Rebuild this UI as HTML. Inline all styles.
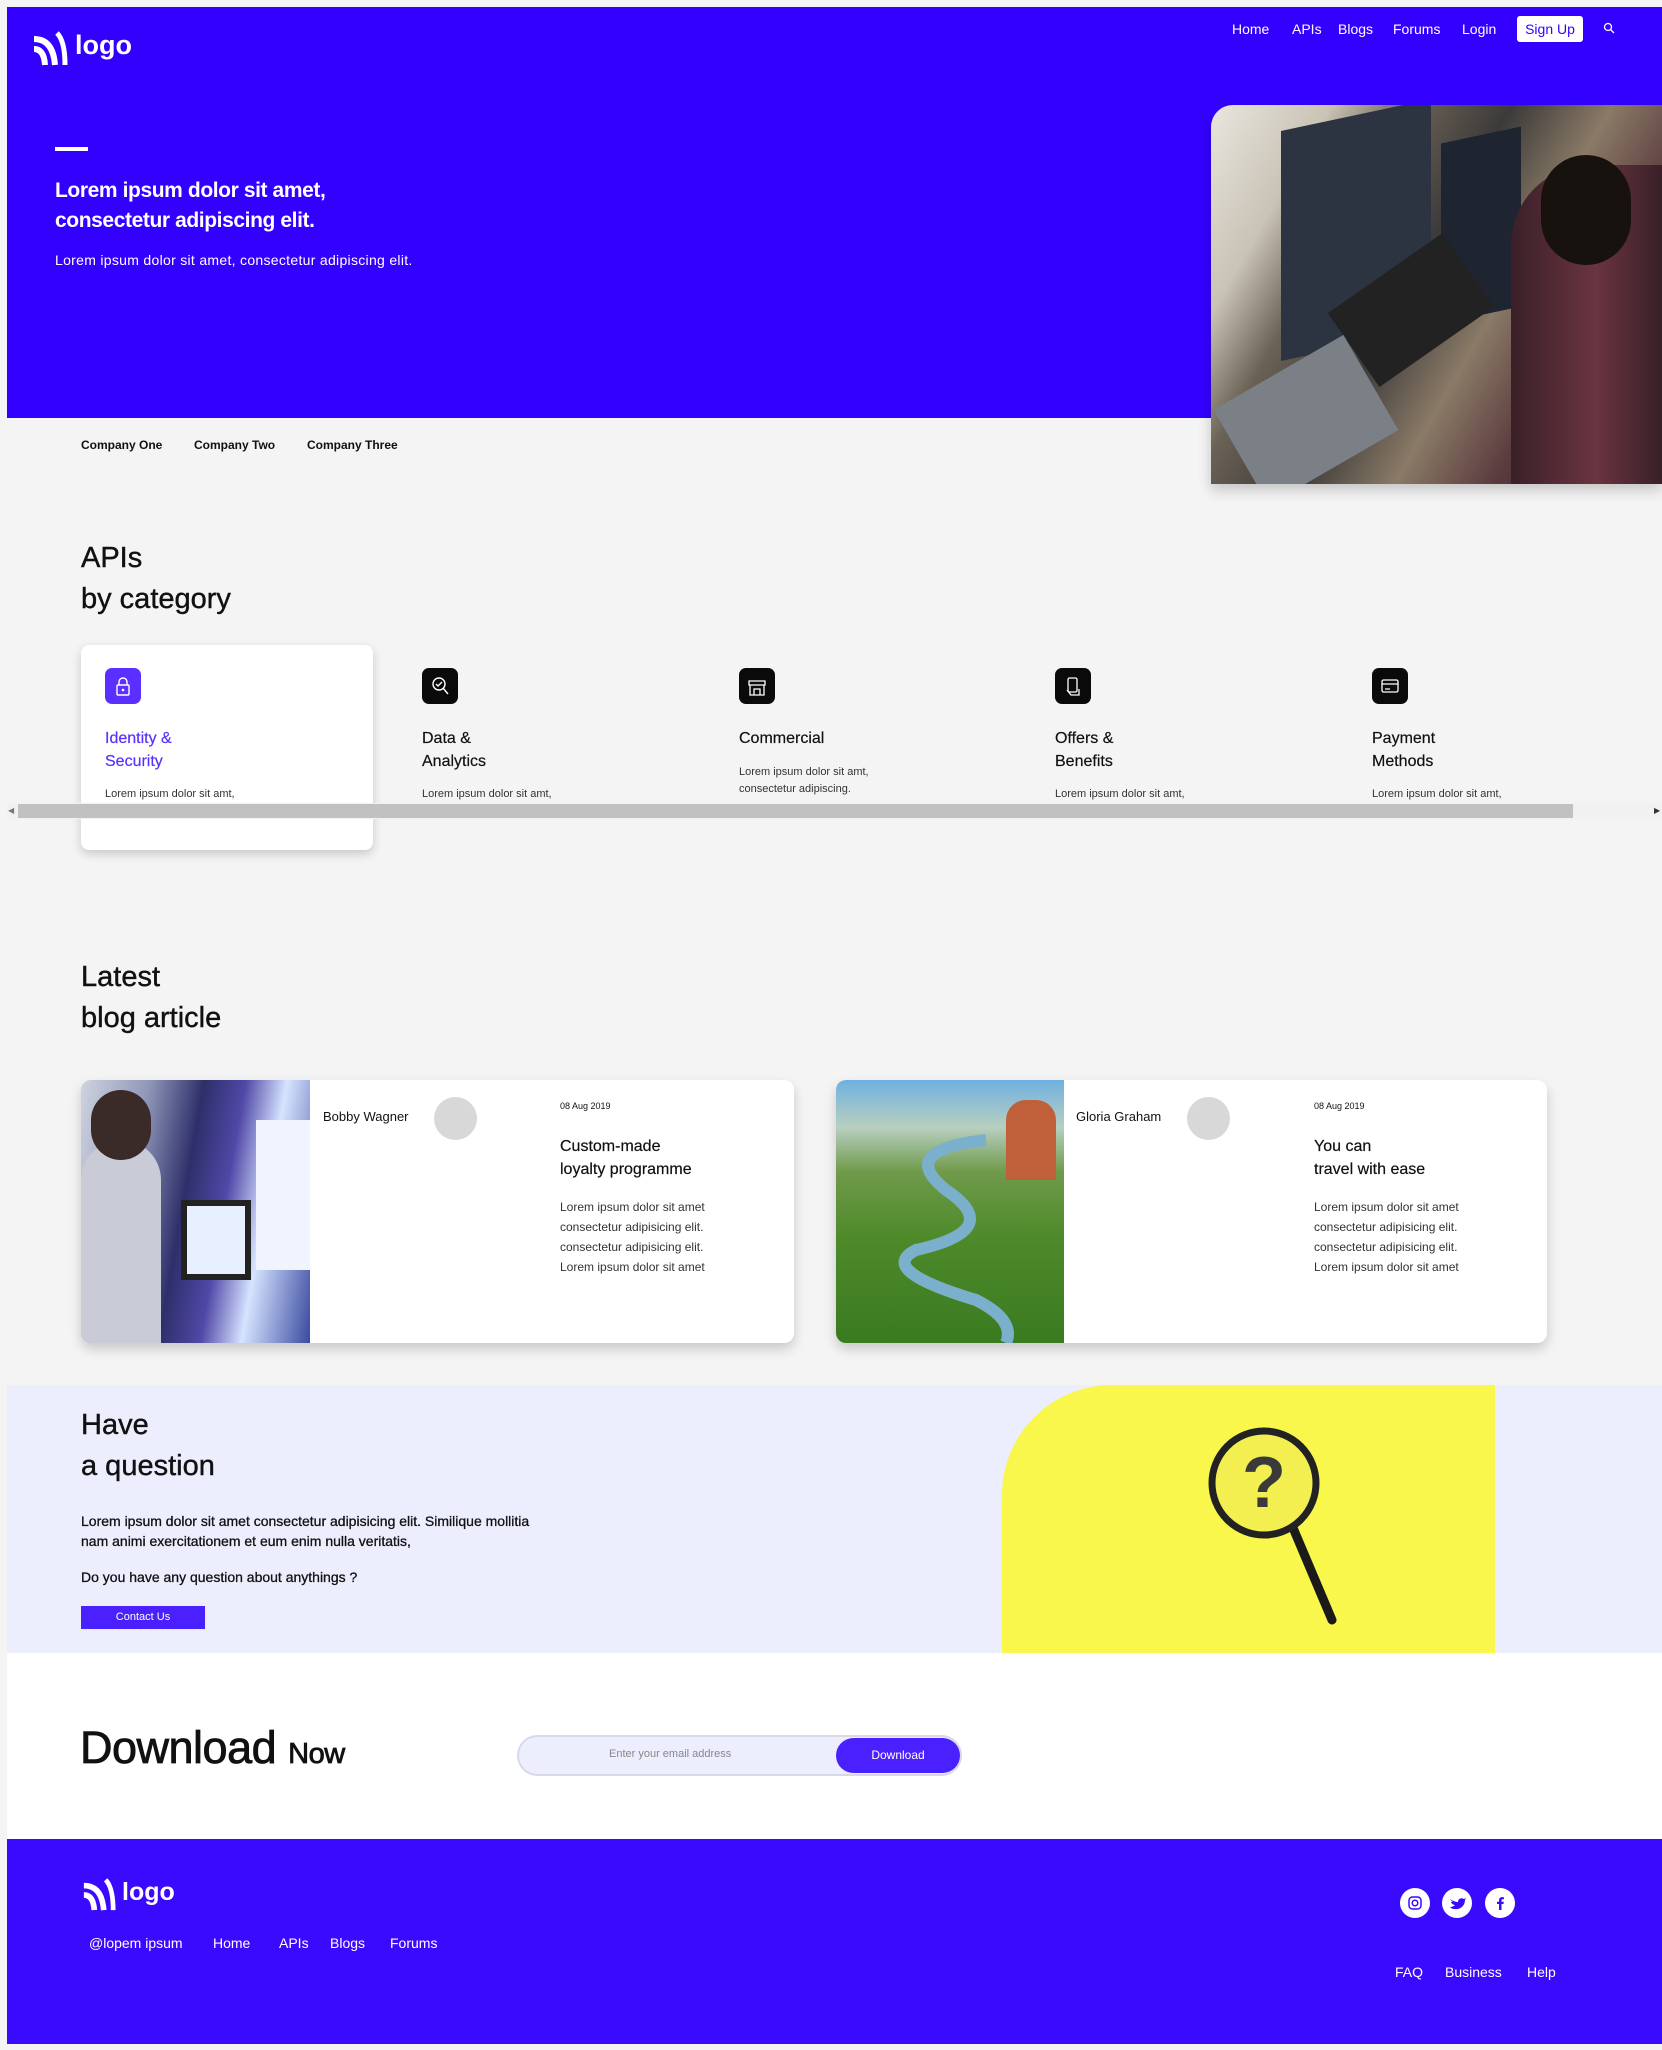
<!DOCTYPE html>
<html><head><meta charset="utf-8"><style>
*{margin:0;padding:0;box-sizing:border-box}
body{width:1662px;height:2050px;background:#f4f4f4;font-family:"Liberation Sans",sans-serif;position:relative;overflow:hidden;color:#111}
.a{position:absolute;white-space:nowrap}
.w{color:#fff}
.nav{font-size:14px;color:#fff;top:21px}
.h2{font-size:29px;color:#111;letter-spacing:0px;-webkit-text-stroke:0.4px #111}
.ic{position:absolute;width:36px;height:36px;border-radius:7px;background:#0a0a0a;top:668px}
.ct{font-size:16px;line-height:23px;top:727px;color:#111;-webkit-text-stroke:0.2px}
.cd{font-size:11px;color:#333;line-height:17px}
.card{position:absolute;background:#fff;border-radius:10px;box-shadow:0 6px 12px rgba(0,0,0,.18);overflow:hidden}
.bt{font-size:12px;line-height:20px;color:#333}
</style></head><body>
<div class="a" style="left:7px;top:7px;width:1655px;height:411px;background:#3300ff"></div>
<svg class="a" style="left:31px;top:31px" width="38" height="36" viewBox="0 0 38 36"><path d="M3 8 Q22 8 24 34" stroke="#fff" stroke-width="6" fill="none"/><path d="M3 18 Q13 18 14 34" stroke="#fff" stroke-width="6" fill="none"/><path d="M26 2 Q34 10 34 34" stroke="#fff" stroke-width="5" fill="none"/></svg>
<div class="a w" style="left:75px;top:30px;font-size:27px;font-weight:bold">logo</div>
<div class="a nav" style="left:1232px">Home</div>
<div class="a nav" style="left:1292px">APIs</div>
<div class="a nav" style="left:1338px">Blogs</div>
<div class="a nav" style="left:1393px">Forums</div>
<div class="a nav" style="left:1462px">Login</div>
<div class="a" style="left:1517px;top:16px;width:66px;height:26px;background:#fff;border-radius:3px;color:#3300ff;font-size:14px;text-align:center;line-height:26px">Sign Up</div>
<svg class="a" style="left:1603px;top:22px" width="12" height="12"><circle cx="5" cy="5" r="3.5" stroke="#fff" stroke-width="1.3" fill="none"/><path d="M7.5 7.5L11 11" stroke="#fff" stroke-width="1.3"/></svg>
<div class="a" style="left:55px;top:147px;width:33px;height:4px;background:#fff"></div>
<div class="a w" style="left:55px;top:176px;font-size:21px;font-weight:bold;line-height:30px;letter-spacing:-0.4px">Lorem ipsum dolor sit amet,<br>consectetur adipiscing elit.</div>
<div class="a w" style="left:55px;top:252px;font-size:14px;letter-spacing:0.3px">Lorem ipsum dolor sit amet, consectetur adipiscing elit.</div>
<div class="a" style="left:1211px;top:105px;width:451px;height:379px;border-radius:22px 0 0 0;overflow:hidden;box-shadow:0 6px 14px rgba(0,0,0,.2);background:linear-gradient(120deg,#e9e6df 0%,#c9c3b5 18%,#6b6256 30%,#3c3a3a 45%,#8a7a66 60%,#5a3a3e 75%,#2c2228 100%)">
<div style="position:absolute;left:70px;top:10px;width:150px;height:230px;background:#2b3440;transform:skewY(-12deg)"></div>
<div style="position:absolute;left:230px;top:30px;width:80px;height:180px;background:#1e2530;transform:skewY(-12deg)"></div>
<div style="position:absolute;left:130px;top:160px;width:140px;height:90px;background:#222;transform:rotate(-35deg)"></div>
<div style="position:absolute;left:300px;top:60px;width:170px;height:330px;border-radius:80px 0 0 0;background:linear-gradient(90deg,#3a2028,#6a3440,#2a1a20)"></div>
<div style="position:absolute;left:330px;top:50px;width:90px;height:110px;border-radius:45px;background:#18120f"></div>
<div style="position:absolute;left:20px;top:260px;width:150px;height:110px;background:#7b7f86;transform:rotate(-30deg)"></div>
</div>
<div class="a" style="left:81px;top:438px;font-size:12px;font-weight:bold">Company One</div>
<div class="a" style="left:194px;top:438px;font-size:12px;font-weight:bold">Company Two</div>
<div class="a" style="left:307px;top:438px;font-size:12px;font-weight:bold">Company Three</div>
<div class="a h2" style="left:81px;top:538px;line-height:41px">APIs<br>by category</div>
<div class="a" style="left:81px;top:645px;width:292px;height:205px;background:#fff;border-radius:8px;box-shadow:0 4px 10px rgba(0,0,0,.18)"></div>
<div class="ic" style="left:105px;background:#5b2fff"><svg width="36" height="36"><rect x="12" y="17" width="12" height="10" rx="1" stroke="#fff" fill="none" stroke-width="1.4"/><path d="M14 17v-3a4 4 0 0 1 8 0v3" stroke="#fff" fill="none" stroke-width="1.4"/><circle cx="18" cy="22" r="1.3" fill="#fff"/></svg></div>
<div class="ic" style="left:422px"><svg width="36" height="36"><circle cx="17" cy="16" r="6" stroke="#fff" fill="none" stroke-width="1.4"/><path d="M21 20l5 6M14 16l2 2 4-4" stroke="#fff" fill="none" stroke-width="1.4"/></svg></div>
<div class="ic" style="left:739px"><svg width="36" height="36"><path d="M10 13h16v4H10zM11 17v10h14V17M15 27v-6h6v6" stroke="#fff" fill="none" stroke-width="1.3"/></svg></div>
<div class="ic" style="left:1055px"><svg width="36" height="36"><rect x="13" y="10" width="9" height="14" rx="1.5" stroke="#fff" fill="none" stroke-width="1.3"/><path d="M12 22l4 5h8v-6" stroke="#fff" fill="none" stroke-width="1.3"/></svg></div>
<div class="ic" style="left:1372px"><svg width="36" height="36"><rect x="10" y="12" width="16" height="12" rx="1.5" stroke="#fff" fill="none" stroke-width="1.3"/><path d="M10 16h16M13 21h5" stroke="#fff" stroke-width="1.3"/></svg></div>
<div class="a ct" style="left:105px;color:#5b2fff">Identity &amp;<br>Security</div>
<div class="a ct" style="left:422px">Data &amp;<br>Analytics</div>
<div class="a ct" style="left:739px">Commercial</div>
<div class="a ct" style="left:1055px">Offers &amp;<br>Benefits</div>
<div class="a ct" style="left:1372px">Payment<br>Methods</div>
<div class="a cd" style="left:105px;top:786px">Lorem ipsum dolor sit amt,</div>
<div class="a cd" style="left:422px;top:786px">Lorem ipsum dolor sit amt,</div>
<div class="a cd" style="left:739px;top:764px">Lorem ipsum dolor sit amt,<br>consectetur adipiscing.</div>
<div class="a cd" style="left:1055px;top:786px">Lorem ipsum dolor sit amt,</div>
<div class="a cd" style="left:1372px;top:786px">Lorem ipsum dolor sit amt,</div>
<div class="a" style="left:7px;top:803px;width:1655px;height:16px;background:#f1f1f1"></div>
<div class="a" style="left:18px;top:804px;width:1555px;height:14px;background:#c1c1c1"></div>
<div class="a" style="left:8px;top:806px;font-size:8px;color:#777">◀</div>
<div class="a" style="left:1654px;top:806px;font-size:8px;color:#333">▶</div>
<div class="a h2" style="left:81px;top:957px;line-height:41px">Latest<br>blog article</div>
<div class="card" style="left:81px;top:1080px;width:713px;height:263px">
<div style="position:absolute;left:0;top:0;width:229px;height:263px;background:linear-gradient(100deg,#cfd3e0 0%,#8f97b8 25%,#2e2f6a 45%,#5148a8 60%,#d6e4ff 75%,#3a4aa0 100%)">
<div style="position:absolute;left:100px;top:120px;width:70px;height:80px;background:#e8f0ff;border:6px solid #222"></div>
<div style="position:absolute;left:175px;top:40px;width:54px;height:150px;background:#f0f4ff"></div>
<div style="position:absolute;left:0;top:60px;width:80px;height:203px;border-radius:40px 40px 0 0;background:#c9cbd6"></div>
<div style="position:absolute;left:10px;top:10px;width:60px;height:70px;border-radius:30px;background:#3a2a28"></div>
</div>
<div class="a" style="left:242px;top:29px;font-size:13px">Bobby Wagner</div>
<div class="a" style="left:353px;top:17px;width:43px;height:43px;border-radius:50%;background:#d8d8d8"></div>
<div class="a" style="left:479px;top:21px;font-size:9px">08 Aug 2019</div>
<div class="a" style="left:479px;top:55px;font-size:16px;line-height:23px;-webkit-text-stroke:0.2px">Custom-made<br>loyalty programme</div>
<div class="a bt" style="left:479px;top:117px">Lorem ipsum dolor sit amet<br>consectetur adipisicing elit.<br>consectetur adipisicing elit.<br>Lorem ipsum dolor sit amet</div>
</div>
<div class="card" style="left:836px;top:1080px;width:711px;height:263px">
<div style="position:absolute;left:0;top:0;width:228px;height:263px;background:linear-gradient(180deg,#6fb0e0 0%,#b8cfc0 18%,#6f9a4a 35%,#4e8a2a 60%,#3a7a20 100%)">
<div style="position:absolute;left:170px;top:20px;width:50px;height:80px;border-radius:20px 20px 0 0;background:#c0603a"></div>
<svg style="position:absolute;left:0;top:0" width="228" height="263"><path d="M150 60 Q60 70 110 110 Q170 150 80 170 Q40 190 140 220 Q180 240 170 263" stroke="#7ab0cc" stroke-width="12" fill="none"/></svg>
</div>
<div class="a" style="left:240px;top:29px;font-size:13px">Gloria Graham</div>
<div class="a" style="left:351px;top:17px;width:43px;height:43px;border-radius:50%;background:#d8d8d8"></div>
<div class="a" style="left:478px;top:21px;font-size:9px">08 Aug 2019</div>
<div class="a" style="left:478px;top:55px;font-size:16px;line-height:23px;-webkit-text-stroke:0.2px">You can<br>travel with ease</div>
<div class="a bt" style="left:478px;top:117px">Lorem ipsum dolor sit amet<br>consectetur adipisicing elit.<br>consectetur adipisicing elit.<br>Lorem ipsum dolor sit amet</div>
</div>
<div class="a" style="left:7px;top:1385px;width:1655px;height:268px;background:#eceefe"></div>
<div class="a" style="left:1002px;top:1385px;width:493px;height:268px;background:#f9f64c;border-radius:110px 0 0 0;overflow:hidden">
<svg width="493" height="268"><line x1="275" y1="105" x2="330" y2="235" stroke="#1a1a1a" stroke-width="9" stroke-linecap="round"/><circle cx="262" cy="98" r="52" fill="#f3ef50" stroke="#222" stroke-width="7"/><text x="262" y="122" font-family="Liberation Sans" font-weight="bold" font-size="72" text-anchor="middle" fill="#3a3a3a">?</text></svg>
</div>
<div class="a h2" style="left:81px;top:1405px;line-height:41px">Have<br>a question</div>
<div class="a" style="left:81px;top:1511px;font-size:14px;line-height:20px;-webkit-text-stroke:0.3px">Lorem ipsum dolor sit amet consectetur adipisicing elit. Similique mollitia<br>nam animi exercitationem et eum enim nulla veritatis,</div>
<div class="a" style="left:81px;top:1569px;font-size:14px;-webkit-text-stroke:0.3px">Do you have any question about anythings ?</div>
<div class="a" style="left:81px;top:1606px;width:124px;height:23px;background:#4a20ff;color:#fff;font-size:11px;text-align:center;line-height:23px">Contact Us</div>
<div class="a" style="left:7px;top:1653px;width:1655px;height:186px;background:#fff"></div>
<div class="a" style="left:80px;top:1722px;font-size:45px;letter-spacing:-0.5px;-webkit-text-stroke:0.8px #111">Download <span style="font-size:29px">Now</span></div>
<div class="a" style="left:517px;top:1735px;width:445px;height:41px;border-radius:21px;background:#eceefe;border:2px solid #d8d8e8"></div>
<div class="a" style="left:609px;top:1748px;font-size:11px;color:#888">Enter your email address</div>
<div class="a" style="left:836px;top:1738px;width:124px;height:35px;border-radius:18px;background:#4a20ff;color:#fff;font-size:12px;text-align:center;line-height:35px">Download</div>
<div class="a" style="left:7px;top:1839px;width:1655px;height:205px;background:#3a0aff"></div>
<svg class="a" style="left:81px;top:1878px" width="36" height="34" viewBox="0 0 38 36"><path d="M3 8 Q22 8 24 34" stroke="#fff" stroke-width="6" fill="none"/><path d="M3 18 Q13 18 14 34" stroke="#fff" stroke-width="6" fill="none"/><path d="M26 2 Q34 10 34 34" stroke="#fff" stroke-width="5" fill="none"/></svg>
<div class="a w" style="left:122px;top:1878px;font-size:25px;font-weight:bold">logo</div>
<div class="a w" style="left:89px;top:1935px;font-size:14px">@lopem ipsum</div>
<div class="a w" style="left:213px;top:1935px;font-size:14px">Home</div>
<div class="a w" style="left:279px;top:1935px;font-size:14px">APIs</div>
<div class="a w" style="left:330px;top:1935px;font-size:14px">Blogs</div>
<div class="a w" style="left:390px;top:1935px;font-size:14px">Forums</div>
<div class="a" style="left:1400px;top:1888px;width:30px;height:30px;border-radius:50%;background:#fff"><svg width="30" height="30"><rect x="9" y="9" width="12" height="12" rx="3.5" stroke="#3a0aff" stroke-width="1.5" fill="none"/><circle cx="15" cy="15" r="2.8" stroke="#3a0aff" stroke-width="1.5" fill="none"/></svg></div>
<div class="a" style="left:1442px;top:1888px;width:30px;height:30px;border-radius:50%;background:#fff"><svg width="30" height="30"><path d="M8 11c3 2 6 3 8 3 0-3 3-5 6-3l2-1-1 2c0 6-5 10-11 9-2 0-3-1-4-2 2 0 4-1 5-2-2 0-4-2-4-3h2c-2-1-3-3-3-3z" fill="#3a0aff"/></svg></div>
<div class="a" style="left:1485px;top:1888px;width:30px;height:30px;border-radius:50%;background:#fff"><svg width="30" height="30"><path d="M16.5 22v-6h2l.3-2.3h-2.3v-1.4c0-.7.2-1.1 1.1-1.1h1.3V9.2c-.3 0-1-.1-1.9-.1-1.8 0-3 1.1-3 3.2v1.4h-2V16h2v6z" fill="#3a0aff"/></svg></div>
<div class="a w" style="left:1395px;top:1964px;font-size:14px">FAQ</div>
<div class="a w" style="left:1445px;top:1964px;font-size:14px">Business</div>
<div class="a w" style="left:1527px;top:1964px;font-size:14px">Help</div>
</body></html>
